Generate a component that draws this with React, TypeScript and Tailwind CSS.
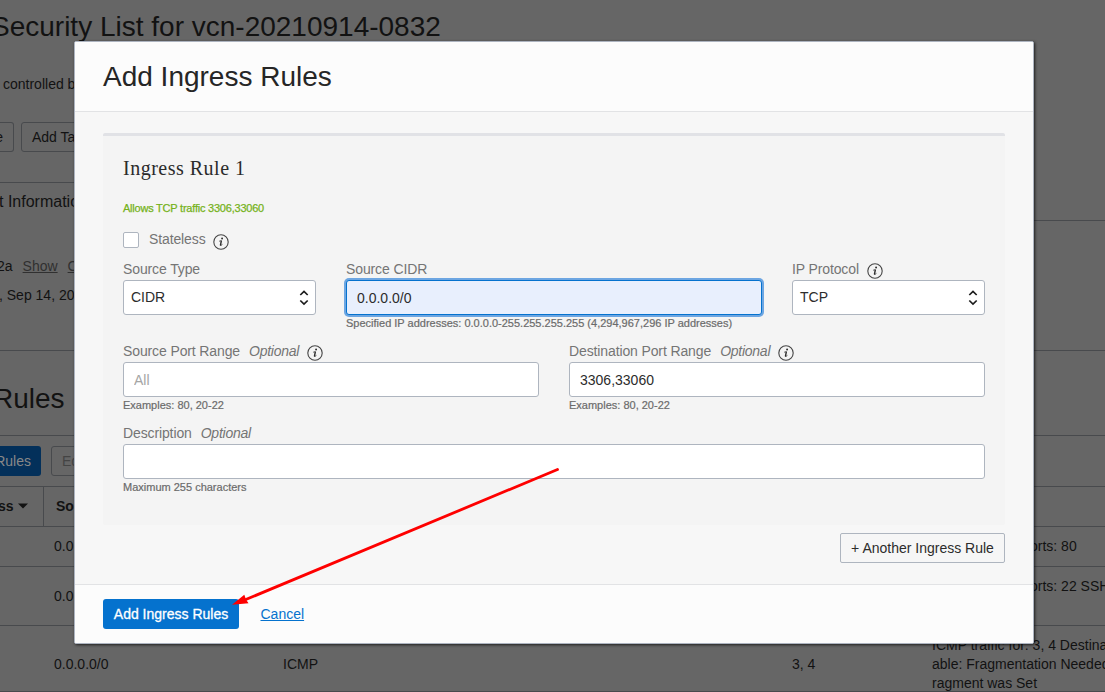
import type { ReactNode } from "react";

function InfoIcon() {
  return (
    <svg width="16" height="16" viewBox="0 0 16 16" className="shrink-0" fill="none">
      <circle cx="8" cy="8" r="7.2" stroke="#454545" strokeWidth="1.1" />
      <circle cx="9.1" cy="4.5" r="0.95" fill="#2b2b2b" />
      <path d="M6.2 7.2 L8.5 6.7" stroke="#2b2b2b" strokeWidth="0.8" />
      <path d="M8.4 6.7 L7.4 11.3" stroke="#2b2b2b" strokeWidth="1.4" />
      <path d="M7 11.2 Q7.8 12 9.4 10.4" stroke="#2b2b2b" strokeWidth="0.8" />
    </svg>
  );
}

function SelectArrows() {
  return (
    <svg width="10" height="17" viewBox="0 0 10 17" fill="none" stroke="#1c1c1c" strokeWidth="1.7">
      <path d="M1.3 6 L5 2.4 L8.7 6" />
      <path d="M1.3 11.5 L5 15.1 L8.7 11.5" />
    </svg>
  );
}

type FieldProps = {
  label: string;
  optional?: boolean;
  info?: boolean;
  hint?: string;
  className?: string;
  children: ReactNode;
};

function Field({ label, optional, info, hint, className = "", children }: FieldProps) {
  return (
    <div className={"flex h-[82px] flex-col " + className}>
      <div className="flex h-5 shrink-0 leading-[18px] tracking-[-0.12px] text-[#757575]">
        <span>{label}</span>
        {optional && <span className="ml-[9px] tracking-[-0.25px] italic">Optional</span>}
        {info && (
          <span className="mt-[3px] ml-2">
            <InfoIcon />
          </span>
        )}
      </div>
      {children}
      {hint && <div className="text-[11px] leading-[17px] text-[#6b6b6b] [-webkit-text-stroke:0.2px_#6b6b6b]">{hint}</div>}
    </div>
  );
}

function Select({ value }: { value: string }) {
  return (
    <div className="flex h-[35px] shrink-0 items-center justify-between rounded-[3px] border border-[#aeb5bf] bg-white pr-[6px] pl-[7px] text-[#2c2c2c]">
      <span className="pb-[2px]">{value}</span>
      <SelectArrows />
    </div>
  );
}

const inputBase = "h-[35px] w-full shrink-0 rounded-[3px] border px-[10px] pt-px text-[#2c2c2c] outline-none placeholder:text-[#a5a5a5] ";

function Backdrop() {
  return (
    <div className="h-[692px] w-[1105px] overflow-hidden bg-[#666] text-[#121212]">
      <div className="flex h-[74px] pt-[11px]">
        <h1 className="-ml-[9px] text-[28px] leading-8">Security List for vcn-20210914-0832</h1>
      </div>
      <p className="h-[48px] pl-[3px] leading-[20px]">controlled by</p>
      <div className="flex h-[60px] gap-[7px]">
        <span className="flex h-[30px] w-[14px] items-center justify-end rounded-r-[3px] border border-l-0 border-[#484a4d] pr-[10px]">e</span>
        <span className="flex h-[30px] w-[90px] items-center rounded-[3px] border border-[#484a4d] pl-[10px] whitespace-nowrap">Add Tags</span>
      </div>
      <div className="flex h-[168px]">
        <div className="w-[100px] border-t border-[#484a4d] pt-[9px] whitespace-nowrap">
          <div className="-ml-px h-[64px] text-[16px] leading-5">t Information</div>
          <div className="-ml-[3px] flex h-[29px] gap-[10px] leading-5">
            <span>2a</span>
            <span className="text-[#303030] underline">Show</span>
            <span className="text-[#303030] underline">Copy</span>
          </div>
          <div className="-ml-px leading-5">, Sep 14, 2021</div>
        </div>
        <div className="mt-[38px] flex-1 border-t border-[#484a4d]" />
      </div>
      <div className="h-[85px] border-t border-[#484a4d] pt-8">
        <h2 className="-ml-[7px] text-[28px] leading-8">Rules</h2>
      </div>
      <div className="flex h-[51px] gap-[10px] border-t border-[#484a4d] pt-[10px]">
        <span className="flex h-[30px] w-[41px] items-center justify-end rounded-r-[3px] bg-[#03305a] pr-[10px] text-[#888]">Rules</span>
        <span className="flex h-[30px] w-[60px] items-center rounded-[3px] border border-[#484a4d] pl-[10px] text-[#444]">Edit</span>
      </div>
      <div className="flex h-[41px] items-center border-y border-[#484a4d] font-bold">
        <span className="flex h-full w-[44px] items-center gap-1 border-r border-[#484a4d] pb-[2px]">
          <span className="-ml-[2px]">ss</span>
          <svg width="10" height="6" viewBox="0 0 10 6">
            <path d="M0 0.5h10L5 5.5z" fill="#121212" />
          </svg>
        </span>
        <span className="pb-[2px] pl-[12px]">Source</span>
      </div>
      <div className="flex h-10 items-center border-b border-[#484a4d] pb-px">
        <span className="w-[1030px] pl-[54px]">0.0.0.0/0</span>
        <span className="whitespace-nowrap">orts: 80</span>
      </div>
      <div className="flex h-[59px] items-center border-b border-[#484a4d]">
        <span className="w-[1030px] shrink-0 pl-[54px]">0.0.0.0/0</span>
        <span className="-mt-5 whitespace-nowrap">orts: 22 SSH</span>
      </div>
      <div className="flex h-[66px] border-b border-[#484a4d]">
        <span className="w-[283px] shrink-0 pt-[28px] pl-[54px] leading-5">0.0.0.0/0</span>
        <span className="w-[509px] shrink-0 pt-[28px] leading-5">ICMP</span>
        <span className="w-[140px] shrink-0 pt-[28px] leading-5">3, 4</span>
        <div className="pt-[10px] leading-[19px] whitespace-nowrap">
          <div>ICMP traffic for: 3, 4 Destination</div>
          <div>able: Fragmentation Needed</div>
          <div>ragment was Set</div>
        </div>
      </div>
    </div>
  );
}

function Dialog() {
  return (
    <section className="flex h-[603px] w-[960px] flex-col overflow-hidden rounded-[2px] border border-[#adb4c0] bg-[#f7f7f7] shadow-[1px_1px_3px_0px_rgba(0,0,0,0.7)]">
      <header className="h-[70px] border-b border-[#e2e3e5] bg-[#fcfcfc] pt-[19px] pl-7">
        <h2 className="text-[28px] leading-8 text-[#262626]">Add Ingress Rules</h2>
      </header>
      <main className="flex h-[472px] flex-col px-7 pt-[21px]">
        <div className="h-[392px] rounded-[2px] border-t-[3px] border-[#e1e2e6] bg-[#f4f4f4] px-5 pt-5">
          <h3 className="h-[44px] font-['Liberation_Serif',serif] text-[20px] leading-6 tracking-[0.5px] text-[#2b2b2b]">Ingress Rule 1</h3>
          <p className="h-[32px] text-[11px] leading-4 tracking-[-0.22px] text-[#75b21a] [-webkit-text-stroke:0.25px_#75b21a]">Allows TCP traffic 3306,33060</p>
          <div className="flex h-7">
            <span className="h-4 w-4 rounded-[2px] border border-[#aeb5bf] bg-white" />
            <span className="ml-[10px] -mt-[2px] leading-[18px] tracking-[-0.12px] text-[#757575]">Stateless</span>
            <span className="mt-[2px] ml-[7px]">
              <InfoIcon />
            </span>
          </div>
          <div className="flex gap-[30px]">
            <Field label="Source Type" className="w-[193px]">
              <Select value="CIDR" />
            </Field>
            <Field label="Source CIDR" className="w-[416px]" hint="Specified IP addresses: 0.0.0.0-255.255.255.255 (4,294,967,296 IP addresses)">
              <input className={inputBase + "border-[#0572ce] bg-[#e8effd] shadow-[0_0_0_2px_#6da6e2]"} defaultValue="0.0.0.0/0" />
            </Field>
            <Field label="IP Protocol" info className="w-[193px]">
              <Select value="TCP" />
            </Field>
          </div>
          <div className="flex gap-[30px]">
            <Field label="Source Port Range" optional info className="w-[416px]" hint="Examples: 80, 20-22">
              <input className={inputBase + "border-[#aeb5bf] bg-white"} placeholder="All" />
            </Field>
            <Field label="Destination Port Range" optional info className="w-[416px]" hint="Examples: 80, 20-22">
              <input className={inputBase + "border-[#aeb5bf] bg-white"} defaultValue="3306,33060" />
            </Field>
          </div>
          <Field label="Description" optional hint="Maximum 255 characters">
            <input className={inputBase + "border-[#aeb5bf] bg-white"} />
          </Field>
        </div>
        <button className="mt-2 h-[30px] w-[165px] self-end rounded-[2px] border border-[#aeb5bf] bg-[#f6f6f6] whitespace-nowrap text-[#2c2c2c]">
          + Another Ingress Rule
        </button>
      </main>
      <footer className="flex flex-1 gap-[21.5px] border-t border-[#e2e3e5] bg-[#fcfcfc] pt-[14px] pl-7">
        <button className="h-[30px] w-[136px] rounded-[3px] bg-[#0572ce] whitespace-nowrap text-white [-webkit-text-stroke:0.3px_white]">Add Ingress Rules</button>
        <a className="leading-[30px] text-[#0572ce] underline">Cancel</a>
      </footer>
    </section>
  );
}

export default function App() {
  return (
    <div className="relative h-[692px] w-[1105px] overflow-hidden font-['Liberation_Sans',Arial,sans-serif] text-[14px] leading-5">
      <Backdrop />
      <div className="absolute top-[41px] left-[74px]">
        <Dialog />
      </div>
      <svg className="pointer-events-none absolute inset-0" width="1105" height="692" viewBox="0 0 1105 692">
        <path d="M557.5 469.5 L244 600.3" stroke="#fe0000" strokeWidth="2.8" strokeLinecap="round" />
        <path d="M232 604.8 L244.3 594.8 L246 599.5 L248.5 603.2 Z" fill="#fe0000" />
      </svg>
    </div>
  );
}
